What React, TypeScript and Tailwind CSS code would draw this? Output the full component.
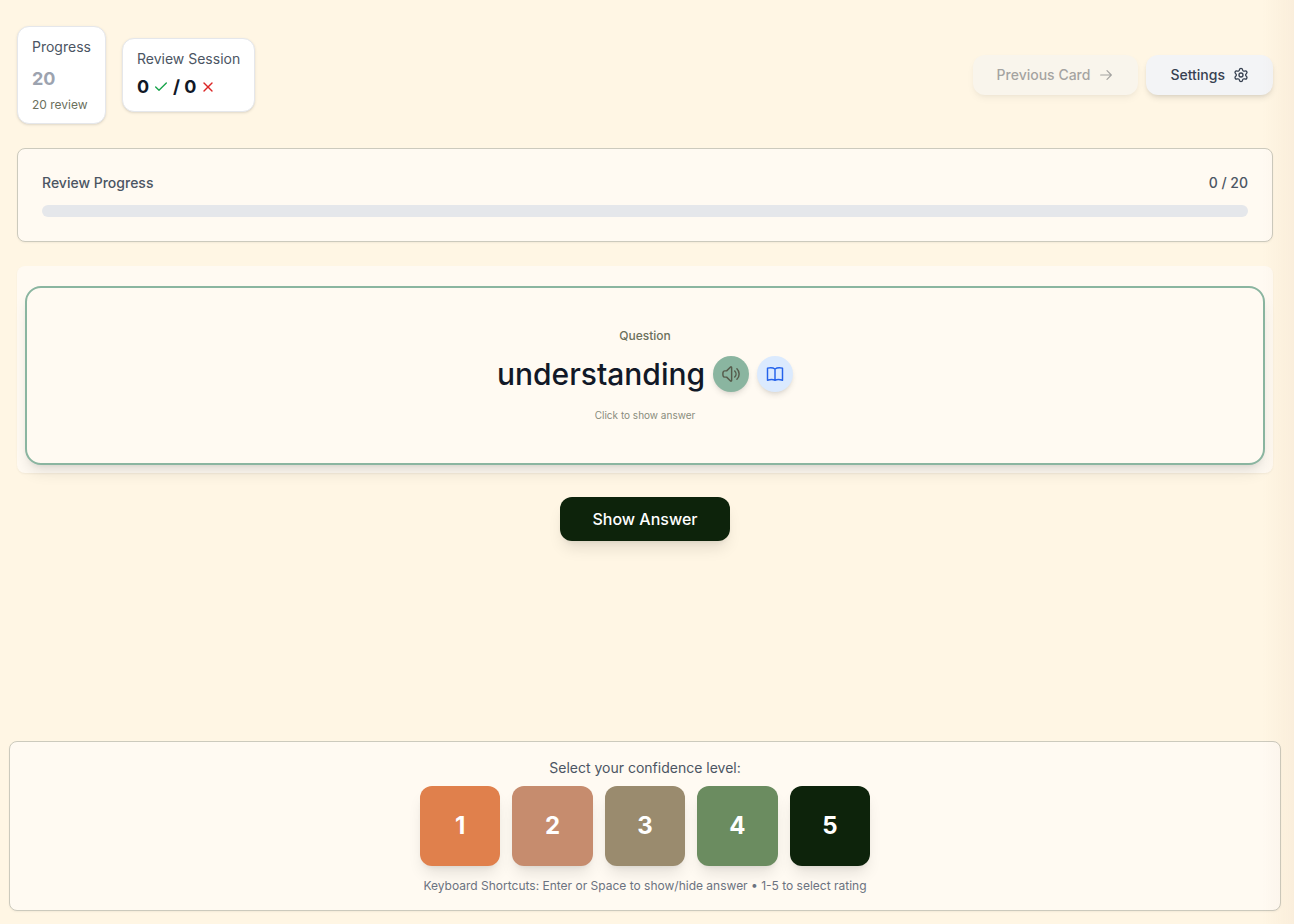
import React, { useState } from 'react';
import { Check, Settings, X } from 'lucide-react';
import { HiOutlineSpeakerWave } from 'react-icons/hi2';

const ratings = [
  { value: 1, color: 'bg-[#e0804c]' },
  { value: 2, color: 'bg-[#c68c6e]' },
  { value: 3, color: 'bg-[#9a8b6e]' },
  { value: 4, color: 'bg-[#6b8c60]' },
  { value: 5, color: 'bg-[#0d230b]' },
];

interface LineIconProps {
  path: string;
  size: number;
}

const LineIcon: React.FC<LineIconProps> = ({ path, size }) => (
  <svg
    width={size}
    height={size}
    viewBox="0 0 24 24"
    fill="none"
    stroke="currentColor"
    strokeWidth={1.75}
    strokeLinecap="round"
    strokeLinejoin="round"
    aria-hidden="true"
  >
    <path d={path} />
  </svg>
);

const arrowPath = 'M4 12h16M13.5 5.5L20 12l-6.5 6.5';
const bookPath =
  'M12 6c-2-1.5-6-1.800-9-1v14.500c3-1 7-1 9 0 2-1 6-1 9 0V5c-3-.8-7-.5-9 1zM12 6v13.500';

const Header: React.FC = () => (
  <header className="flex flex-wrap items-center justify-between gap-4">
    <div className="flex items-center gap-4">
      <div className="rounded-xl border border-gray-200 bg-white px-[14px] py-[10px] shadow-sm">
        <p className="text-sm text-[#4b5563]">Progress</p>
        <p className="mt-2 text-lg leading-7 font-bold text-[#9ca3af]">20</p>
        <p className="mt-1 text-xs text-[#6b705c]">20 review</p>
      </div>
      <div className="rounded-xl border border-gray-200 bg-white px-[14px] py-[10px] shadow-sm">
        <p className="text-sm text-[#4b5563]">Review Session</p>
        <p className="mt-1 flex items-center gap-1 text-lg leading-7 font-bold text-[#111827]">
          <span>0</span>
          <Check className="text-[#16a34a]" size={16} strokeWidth={2} />
          <span>/ 0</span>
          <X className="text-[#dc2626]" size={16} strokeWidth={2} />
        </p>
      </div>
    </div>
    <div className="flex gap-2">
      <button
        type="button"
        disabled
        className="flex h-10 items-center gap-2 rounded-xl bg-[#f3f4f6] px-6 text-sm font-medium text-[#374151] opacity-45 shadow-md"
      >
        Previous Card
        <LineIcon path={arrowPath} size={16} />
      </button>
      <button
        type="button"
        className="flex h-10 items-center gap-2 rounded-xl bg-[#f3f4f6] px-6 text-sm font-medium text-[#374151] shadow-md"
      >
        Settings
        <Settings size={16} strokeWidth={2} />
      </button>
    </div>
  </header>
);

const ReviewProgress: React.FC<{ done: number; total: number }> = ({ done, total }) => (
  <section className="rounded-lg border border-[#cccabd] bg-[#fffaf2] p-6 shadow-xs">
    <div className="flex justify-between text-sm font-medium text-[#4b5563]">
      <span>Review Progress</span>
      <span>
        {done} / {total}
      </span>
    </div>
    <div className="mt-3 h-3 overflow-hidden rounded-full bg-[#e5e7eb]">
      <div className="h-full bg-[#8ab5a0]" style={{ width: `${(done / total) * 100}%` }} />
    </div>
  </section>
);

const QuestionCard: React.FC = () => (
  <section className="rounded-lg bg-[#fffaf2] px-2 pt-5 pb-2 shadow-xs">
    <div className="flex flex-col items-center rounded-2xl border-2 border-[#8ab5a0] bg-[#fffaf2] p-10 shadow-lg">
      <p className="text-xs font-medium text-[#6b705c]">Question</p>
      <div className="mt-3 flex items-center gap-2">
        <h1 className="text-3xl leading-9 font-medium text-[#111827]">understanding</h1>
        <button
          type="button"
          aria-label="Play audio"
          className="flex h-9 w-9 items-center justify-center rounded-full bg-[#8ab5a0] text-[#565b4b] shadow-md"
        >
          <HiOutlineSpeakerWave size={20} strokeWidth={1.75} />
        </button>
        <button
          type="button"
          aria-label="Open dictionary"
          className="flex h-9 w-9 items-center justify-center rounded-full bg-[#dbeafe] text-[#2563eb] shadow-md"
        >
          <LineIcon path={bookPath} size={20} />
        </button>
      </div>
      <p className="mt-4 text-[10px] leading-[15px] text-[#898c7d]">Click to show answer</p>
    </div>
  </section>
);

export default function App() {
  const [rating, setRating] = useState<number | null>(null);

  return (
    <div className="flex min-h-screen flex-col bg-[#fff6e4] pr-1 pb-[13px] font-['Inter',sans-serif]">
      <main className="flex flex-col gap-6 px-[17px] pt-[26px] pb-6">
        <Header />
        <ReviewProgress done={0} total={20} />
        <QuestionCard />
        <button
          type="button"
          className="h-11 self-center rounded-xl bg-[#0d230b] px-8 text-base font-medium text-white shadow-lg"
        >
          Show Answer
        </button>
      </main>

      <footer className="mx-[9px] mt-auto flex flex-col items-center rounded-lg border border-[#cccabd] bg-[#fffaf2] p-4 shadow-xs">
        <p className="text-sm text-[#4b5563]">Select your confidence level:</p>
        <div className="mt-2 grid w-full max-w-[450px] grid-cols-5 gap-3">
          {ratings.map(({ value, color }) => (
            <button
              key={value}
              type="button"
              aria-pressed={rating === value}
              onClick={() => setRating(value)}
              className={`h-20 rounded-xl text-2xl font-bold text-white shadow-lg ${color}`}
            >
              {value}
            </button>
          ))}
        </div>
        <p className="mt-3 text-xs text-[#6b7280]">
          Keyboard Shortcuts: Enter or Space to show/hide answer • 1-5 to select rating
        </p>
      </footer>

      {/* Soft shade along the right edge of the window */}
      <div className="pointer-events-none fixed inset-y-0 right-0 w-8 bg-gradient-to-r from-transparent to-[#a06040]/5" />
    </div>
  );
}
